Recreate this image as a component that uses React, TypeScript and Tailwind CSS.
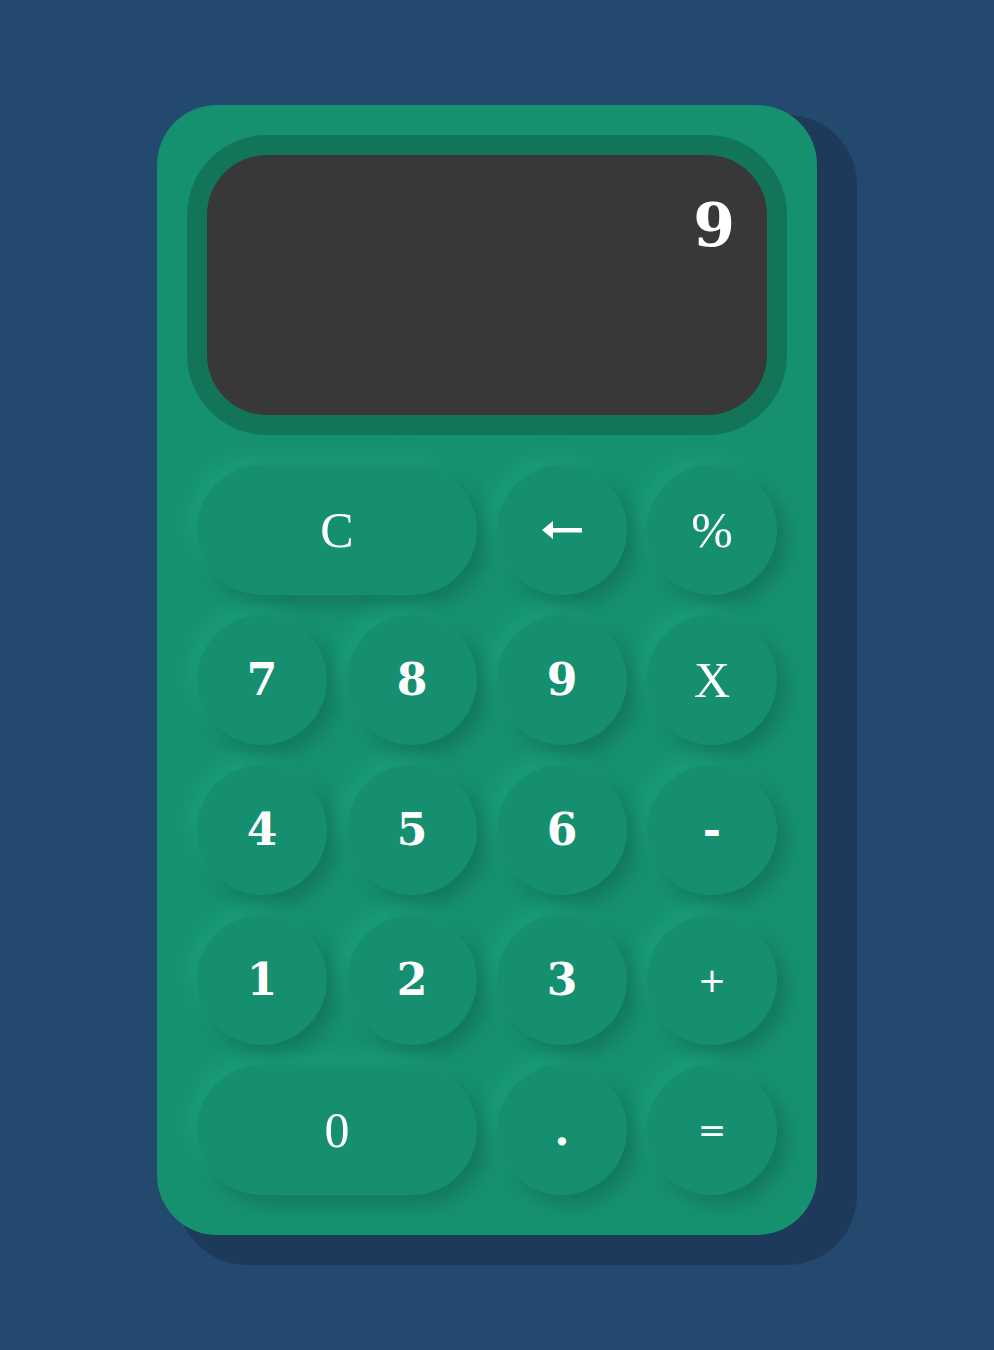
import React from "react";

const shadow =
  "shadow-[10px_10px_18px_rgba(0,0,0,0.16),-10px_-10px_18px_rgba(40,190,150,0.22)]";

function Btn({ label, wide, kind }: { label: string; wide?: boolean; kind?: "d" | "r" | "s" }) {
  const font =
    kind === "r"
      ? "font-['Liberation_Serif',serif] text-[50px] font-normal"
      : kind === "s"
      ? "font-['DejaVu_Sans',sans-serif] text-[34px] font-normal"
      : "font-['DejaVu_Serif',serif] text-[44px] font-semibold";
  return (
    <div
      className={`h-[130px] ${wide ? "w-[280px] col-span-2" : "w-[130px]"} rounded-full bg-[#168f70] ${shadow} flex items-center justify-center text-white ${font}`}
    >
      {label}
    </div>
  );
}

export default function App() {
  return (
    <div className="min-h-[1350px] w-full bg-[#234a6e] pt-[105px] pl-[157px]">
      <div className="w-[660px] h-[1130px] rounded-[60px] bg-[#16916f] shadow-[30px_20px_0_10px_#1e3a5a] pt-[30px] px-[30px]">
        <div className="h-[300px] w-[600px] rounded-[80px] bg-[#12755a] p-[20px]">
          <div className="h-[260px] w-[560px] rounded-[60px] bg-[#383838] flex justify-end items-start pr-[32px] pt-[30px]">
            <span className="font-['DejaVu_Serif',serif] font-bold text-[60px] leading-[80px] text-white">9</span>
          </div>
        </div>
        <div className="mt-[30px] px-[10px] grid grid-cols-[130px_130px_130px_130px] gap-[20px]">
          <Btn label="C" wide kind="r" />
          <div className={`h-[130px] w-[130px] rounded-full bg-[#168f70] ${shadow} flex items-center justify-center`}>
            <svg width="40" height="24" viewBox="0 0 40 24">
              <path d="M0 12 L11 3 L11 10 L40 10 L40 14.5 L11 14.5 L11 21 Z" fill="white" />
            </svg>
          </div>
          <Btn label="%" kind="r" />
          <Btn label="7" />
          <Btn label="8" />
          <Btn label="9" />
          <Btn label="X" kind="r" />
          <Btn label="4" />
          <Btn label="5" />
          <Btn label="6" />
          <Btn label="-" />
          <Btn label="1" />
          <Btn label="2" />
          <Btn label="3" />
          <Btn label="+" kind="s" />
          <Btn label="0" wide kind="r" />
          <Btn label="." />
          <Btn label="=" kind="s" />
        </div>
      </div>
    </div>
  );
}
